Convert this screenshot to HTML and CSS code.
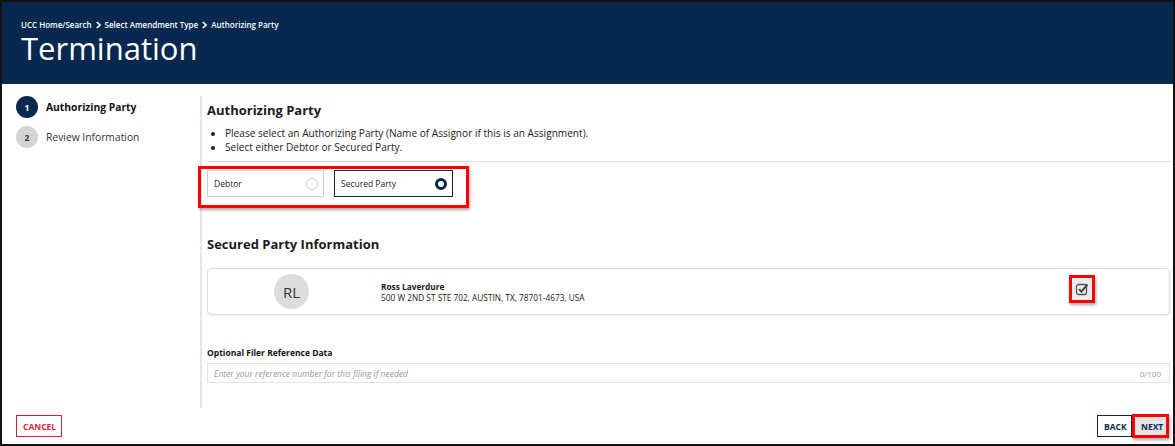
FILE: index.html
```html
<!DOCTYPE html>
<html lang="en">
<head>
    <meta charset="UTF-8">
    <title>Termination</title>
    <link rel="stylesheet" href="styles.css">
</head>
<body>
<div class="page">

    <header class="banner">
        <nav class="crumbs">
            <span>UCC Home/Search</span>
            <svg class="chev" width="5" height="8" viewBox="0 0 5 8"><path d="M0.8 1 L4 4 L0.8 7" fill="none" stroke="#fff" stroke-width="1.6"/></svg>
            <span>Select Amendment Type</span>
            <svg class="chev" width="5" height="8" viewBox="0 0 5 8"><path d="M0.8 1 L4 4 L0.8 7" fill="none" stroke="#fff" stroke-width="1.6"/></svg>
            <span>Authorizing Party</span>
        </nav>
        <h1>Termination</h1>
    </header>

    <div class="content">
        <!-- steps -->
        <aside class="steps">
            <div class="step active">
                <span class="step-num">1</span>
                <span class="step-label">Authorizing Party</span>
            </div>
            <div class="step">
                <span class="step-num">2</span>
                <span class="step-label">Review Information</span>
            </div>
        </aside>

        <main class="main">
            <h2>Authorizing Party</h2>
            <ul class="notes">
                <li>Please select an Authorizing Party (Name of Assignor if this is an Assignment).</li>
                <li>Select either Debtor or Secured Party.</li>
            </ul>
            <hr class="rule">

            <div class="options marked">
                <label class="option">
                    <span>Debtor</span>
                    <span class="radio"></span>
                </label>
                <label class="option selected">
                    <span>Secured Party</span>
                    <span class="radio"></span>
                </label>
            </div>

            <h2 class="info-title">Secured Party Information</h2>
            <div class="party-card">
                <div class="avatar-col">
                    <span class="avatar">RL</span>
                </div>
                <div class="party-text">
                    <div class="party-name">Ross Laverdure</div>
                    <div class="party-addr">500 W 2ND ST STE 702, AUSTIN, TX, 78701-4673, USA</div>
                </div>
                <div class="check-col">
                    <span class="check-box">
                        <svg width="14" height="14" viewBox="0 0 14 14">
                            <rect x="1.5" y="2.5" width="10" height="10" rx="2" fill="none" stroke="#555" stroke-width="1.3"/>
                            <path d="M4 7.2 L6.4 9.6 L12.5 2.5" fill="none" stroke="#444" stroke-width="2"/>
                        </svg>
                    </span>
                </div>
            </div>

            <div class="field-label">Optional Filer Reference Data</div>
            <div class="field">
                <input type="text" placeholder="Enter your reference number for this filing if needed">
                <span class="count">0/100</span>
            </div>
        </main>
    </div>

    <footer class="actions">
        <button class="btn cancel">CANCEL</button>
        <div class="right-btns">
            <button class="btn back">BACK</button>
            <button class="btn next">NEXT</button>
        </div>
    </footer>

</div>
</body>
</html>
```

FILE: styles.css
```css
body {
    margin: 0;
    font-family: "Open Sans", "Noto Sans", sans-serif;
    background-color: #fff;
    color: #222;
}

.page {
    width: 1175px;
    height: 446px;
    box-sizing: border-box;
    border: 2px solid #111;
    display: flex;
    flex-direction: column;
    overflow: hidden;
}

/* header */
.banner {
    background-color: #08284f;
    color: #fff;
    padding: 17px 19px 19px;
}

.crumbs {
    display: flex;
    align-items: center;
    gap: 4px;
    font-size: 8px;
    font-weight: 600;
    line-height: 12px;
}

.banner h1 {
    margin: 0;
    font-size: 31px;
    font-weight: 400;
    line-height: 34px;
}

/* body */
.content {
    display: flex;
    margin-top: 12px;
}

.steps {
    width: 184px;
    padding-left: 14px;
    border-right: 2px solid #e6e6e6;
    display: flex;
    flex-direction: column;
    gap: 8px;
}

.step {
    display: flex;
    align-items: center;
    gap: 8px;
    font-size: 10.3px;
    color: #333;
}

.step-num {
    width: 22px;
    height: 22px;
    border-radius: 50%;
    background-color: #d4d4d4;
    color: #333;
    font-size: 8.5px;
    font-weight: 700;
    display: flex;
    align-items: center;
    justify-content: center;
}

.step.active .step-num {
    background-color: #08284f;
    color: #fff;
}

.step.active .step-label {
    font-weight: 700;
    color: #111;
}

.main {
    flex: 1;
    padding: 5px 3px 25px 5px;
}

.main h2 {
    margin: 0;
    font-size: 13px;
    font-weight: 700;
    line-height: 19px;
    color: #1b1b1b;
}

.notes {
    margin: 6px 0 0;
    padding-left: 18px;
    font-size: 10.1px;
    line-height: 14px;
    color: #222;
}

.rule {
    margin: 7px 0 0;
    border: none;
    border-top: 1px solid #dcdcdc;
}

/* choice boxes */
.options {
    display: flex;
    gap: 10px;
    margin-top: 8px;
    position: relative;
}

.marked::after {
    content: "";
    position: absolute;
    top: -4px;
    left: -9px;
    width: 265px;
    height: 36px;
    border: 3px solid #f00;
    box-shadow: 1px 2px 3px rgba(0, 0, 0, 0.35);
}

.option {
    width: 117px;
    height: 27px;
    box-sizing: border-box;
    border: 1px solid #cfcfcf;
    padding: 0 5px 0 6px;
    display: flex;
    align-items: center;
    justify-content: space-between;
    font-size: 8.5px;
    color: #222;
}

.option.selected {
    width: 119px;
    border: 1.5px solid #08284f;
}

.radio {
    width: 10px;
    height: 10px;
    border-radius: 50%;
    border: 1px solid #c4c4c4;
}

.option.selected .radio {
    width: 6px;
    height: 6px;
    border: 3px solid #08284f;
    background-color: #fff;
}

.info-title {
    margin-top: 38px !important;
}

/* party card */
.party-card {
    margin-top: 14px;
    height: 47px;
    box-sizing: border-box;
    border: 1px solid #dcdcdc;
    border-radius: 4px;
    box-shadow: 0 1px 2px rgba(0, 0, 0, 0.08);
    display: flex;
    align-items: center;
}

.avatar-col {
    width: 167px;
    display: flex;
    justify-content: center;
}

.avatar {
    width: 35px;
    height: 35px;
    border-radius: 50%;
    background-color: #dcdcdc;
    color: #333;
    font-size: 15px;
    display: flex;
    align-items: center;
    justify-content: center;
}

.party-text {
    flex: 1;
    padding-left: 6px;
    font-size: 8.3px;
    line-height: 11px;
    color: #222;
}

.party-name {
    font-weight: 700;
}

.check-col {
    width: 100px;
    display: flex;
    justify-content: flex-start;
    margin-top: -5px;
}

.check-box {
    width: 20px;
    height: 22px;
    border: 3px solid #f00;
    background-color: #ececec;
    box-shadow: 1px 2px 3px rgba(0, 0, 0, 0.35);
    display: flex;
    align-items: center;
    justify-content: center;
}

/* reference field */
.field-label {
    margin-top: 32px;
    font-size: 8.5px;
    font-weight: 700;
    line-height: 12px;
    color: #111;
}

.field {
    margin-top: 4px;
    height: 20px;
    box-sizing: border-box;
    border: 1px solid #e2e2e2;
    display: flex;
    align-items: center;
    padding: 0 8px 0 6px;
}

.field input {
    flex: 1;
    border: none;
    outline: none;
    padding: 0;
    font-family: inherit;
    font-size: 8.5px;
    font-style: italic;
}

.field input::placeholder {
    color: #9a9a9a;
}

.count {
    font-size: 8px;
    color: #999;
}

/* footer */
.actions {
    display: flex;
    justify-content: space-between;
    align-items: flex-start;
    padding: 7px 4px 0 14px;
}

.right-btns {
    display: flex;
}

.btn {
    height: 22px;
    box-sizing: border-box;
    background: #fff;
    font-family: inherit;
    font-size: 8.5px;
    font-weight: 700;
    padding: 0 6px;
    cursor: pointer;
}

.cancel {
    width: 46px;
    border: 1px solid #d71f36;
    color: #d71f36;
}

.back {
    width: 35px;
    border: 1px solid #08284f;
    color: #08284f;
}

.next {
    width: 37px;
    height: 24px;
    margin-top: -1px;
    border: 3px solid #f00;
    background-color: #e4e4e4;
    color: #08284f;
    box-shadow: 1px 2px 3px rgba(0, 0, 0, 0.35);
}
```
